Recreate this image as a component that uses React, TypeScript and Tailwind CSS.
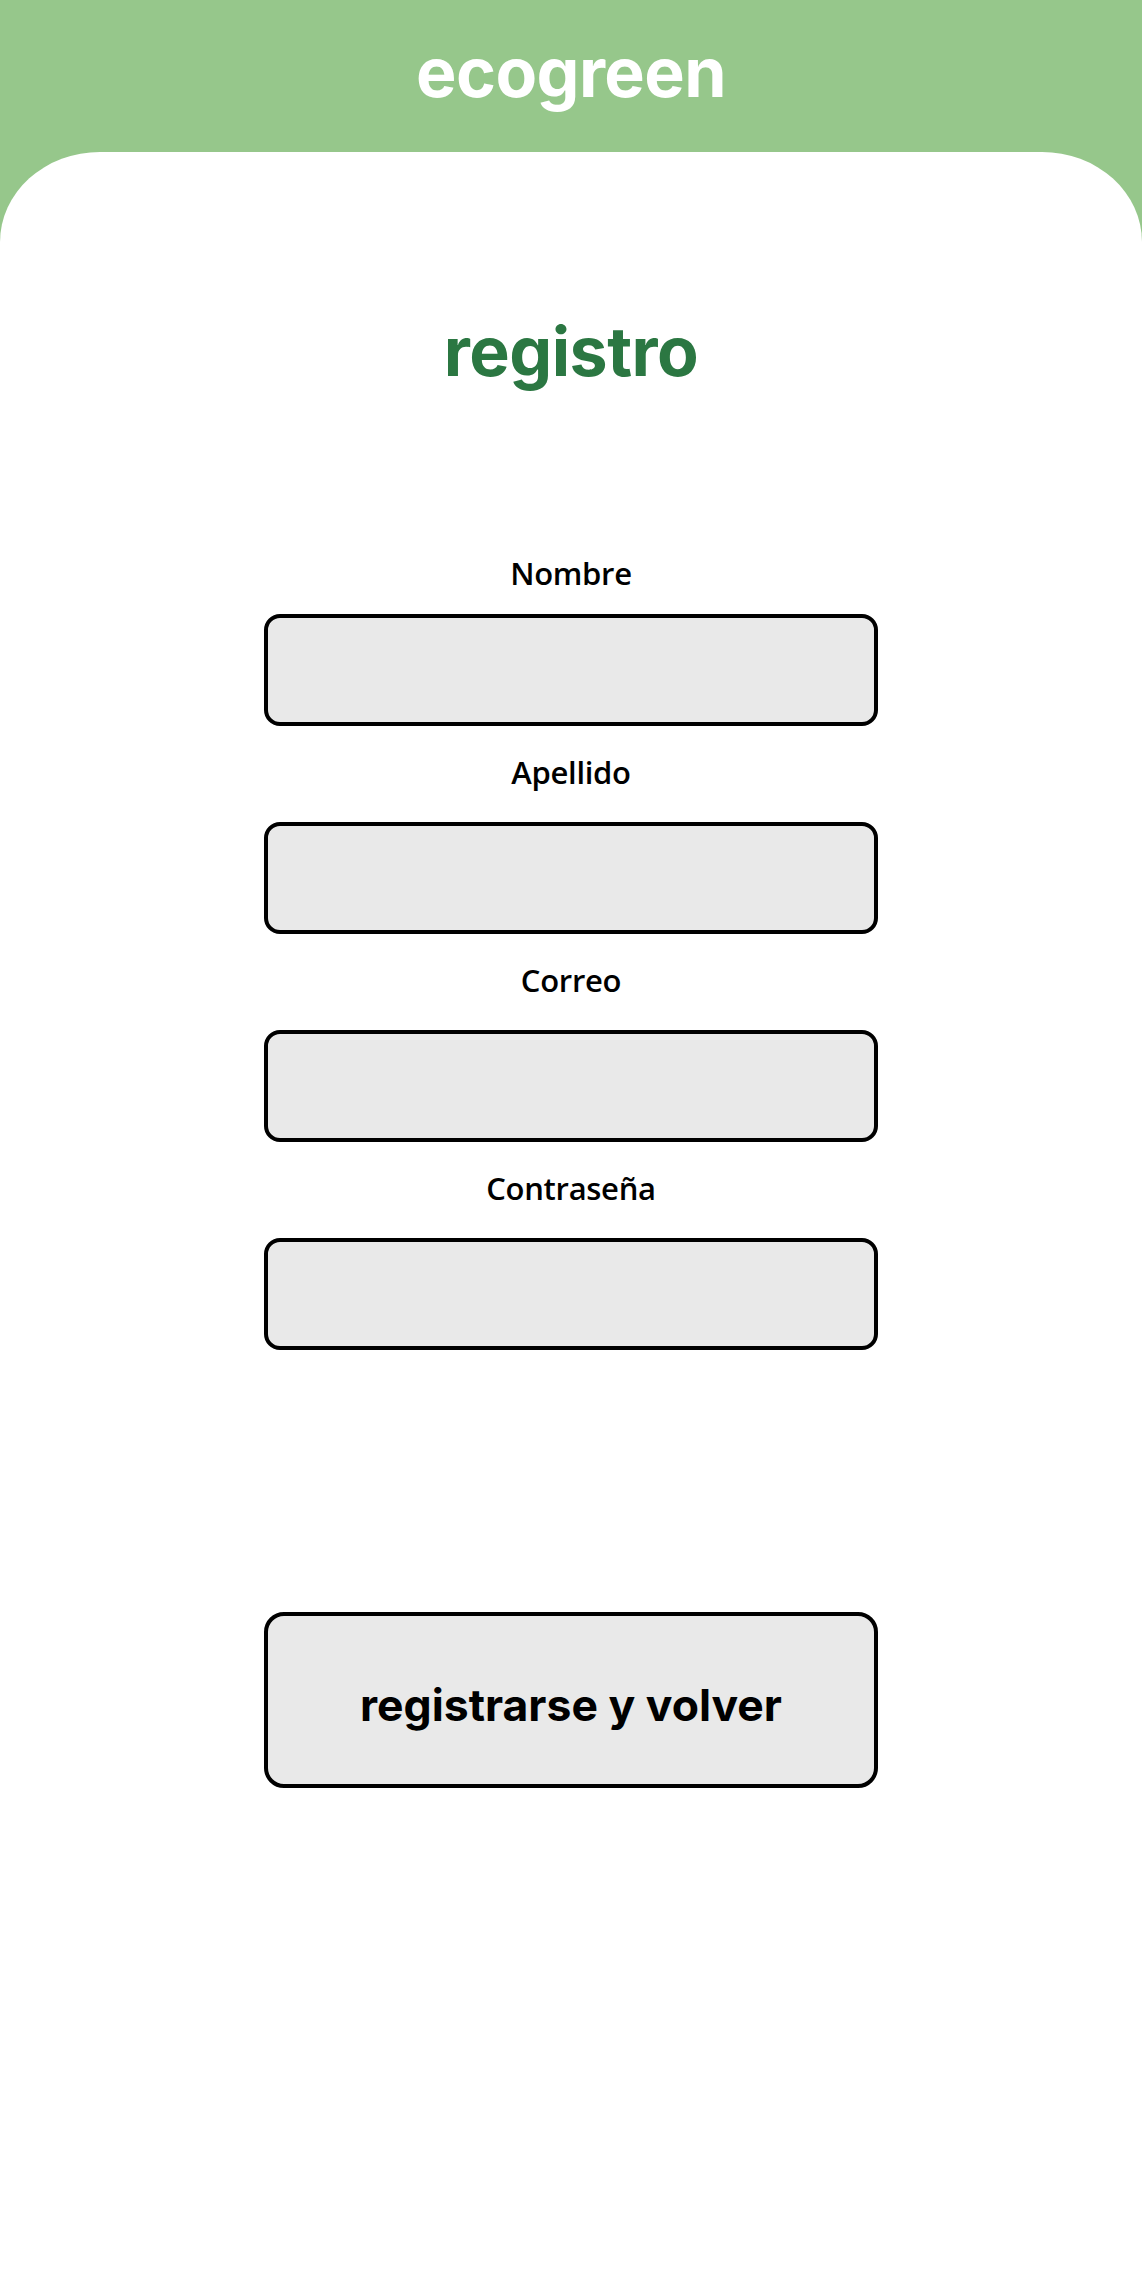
const fields = ["Nombre", "Apellido", "Correo", "Contraseña"];

export default function App() {
    return (
        <div className="min-h-screen bg-[#96c78b] flex flex-col" style={{ fontFamily: "Inter, 'Liberation Sans', sans-serif" }}>
            {/* Header */}
            <header className="h-[152px] shrink-0 flex justify-center pt-[38px]">
                <h1 className="text-[68px] leading-none font-bold text-white tracking-[-0.6px]">ecogreen</h1>
            </header>

            {/* Card */}
            <main className="flex-1 bg-white rounded-tl-[100px_90px] rounded-tr-[100px_90px] flex flex-col items-center pb-[400px]">
                <h2 className="mt-[165px] text-[68px] leading-none font-bold text-[#2b7742] tracking-[-0.5px]">registro</h2>

                <form className="mt-[173px] flex flex-col items-center" onSubmit={(e) => e.preventDefault()}>
                    {fields.map((name, i) => (
                        <div key={name} className={`flex flex-col items-center ${i > 0 ? "mt-[31px]" : ""}`}>
                            <label
                                className="text-[31px] leading-none font-semibold text-black tracking-[-0.3px]"
                                style={{ fontFamily: "'Open Sans', 'Noto Sans', sans-serif" }}
                            >
                                {name}
                            </label>
                            <input
                                type={name === "Contraseña" ? "password" : "text"}
                                className={`${i > 0 ? "mt-[34px]" : "mt-[25px]"} w-[614px] h-[112px] bg-[#e9e9e9] border-4 border-black rounded-[16px] px-5 text-2xl outline-none`}
                            />
                        </div>
                    ))}

                    <button
                        type="submit"
                        className="mt-[262px] w-[614px] h-[176px] bg-[#e9e9e9] border-4 border-black rounded-[20px] flex items-center justify-center pt-[10px] text-[44.5px] font-bold text-black"
                    >
                        registrarse y volver
                    </button>
                </form>
            </main>
        </div>
    );
}
